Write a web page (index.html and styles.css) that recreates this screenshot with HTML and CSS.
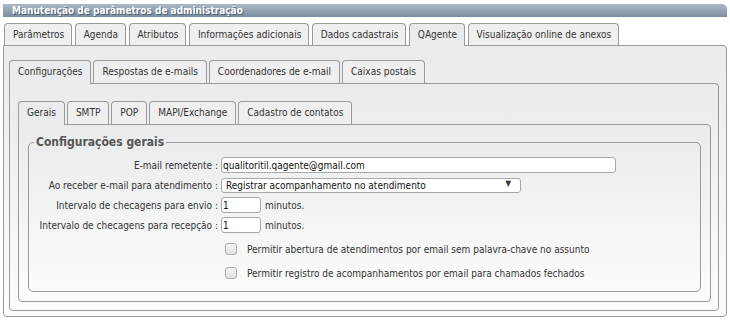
FILE: index.html
```html
<!DOCTYPE html>
<html lang="pt-br">
<head>
  <meta charset="UTF-8" />
  <title>Manutenção de parâmetros de administração</title>
  <link rel="stylesheet" href="styles.css">
</head>
<body>
  <div class="page">
    <div class="titlebar">Manutenção de parâmetros de administração</div>

    <div class="tabs tabs-main">
      <div class="tab">Parâmetros</div>
      <div class="tab">Agenda</div>
      <div class="tab">Atributos</div>
      <div class="tab">Informações adicionais</div>
      <div class="tab">Dados cadastrais</div>
      <div class="tab active">QAgente</div>
      <div class="tab">Visualização online de anexos</div>
    </div>
    <div class="panel panel-main">

      <div class="tabs tabs-sub">
        <div class="tab active">Configurações</div>
        <div class="tab">Respostas de e-mails</div>
        <div class="tab">Coordenadores de e-mail</div>
        <div class="tab">Caixas postais</div>
      </div>
      <div class="panel panel-sub">

        <div class="tabs tabs-sub">
          <div class="tab active">Gerais</div>
          <div class="tab">SMTP</div>
          <div class="tab">POP</div>
          <div class="tab">MAPI/Exchange</div>
          <div class="tab">Cadastro de contatos</div>
        </div>
        <div class="panel panel-inner">
          <fieldset class="config">
            <legend>Configurações gerais</legend>

            <div class="form-row">
              <label>E-mail remetente :</label>
              <input type="text" class="input-email" value="qualitoritil.qagente@gmail.com">
            </div>
            <div class="form-row">
              <label>Ao receber e-mail para atendimento :</label>
              <div class="select-wrap">
                <select>
                  <option>Registrar acompanhamento no atendimento</option>
                </select>
              </div>
            </div>
            <div class="form-row">
              <label>Intervalo de checagens para envio :</label>
              <div class="inline"><input type="text" class="input-small" value="1"> minutos.</div>
            </div>
            <div class="form-row">
              <label>Intervalo de checagens para recepção :</label>
              <div class="inline"><input type="text" class="input-small" value="1"> minutos.</div>
            </div>

            <div class="check-row check-first">
              <input type="checkbox">
              <span>Permitir abertura de atendimentos por email sem palavra-chave no assunto</span>
            </div>
            <div class="check-row">
              <input type="checkbox">
              <span>Permitir registro de acompanhamentos por email para chamados fechados</span>
            </div>
          </fieldset>
        </div>
      </div>
    </div>
  </div>
</body>
</html>
```

FILE: styles.css
```css
:root {
  --borda: #9a9a9a;
  --texto: #333333;
  --painel-topo: #e9ebec;
  --painel-base: #fcfcfc;
  --aba: #efefef;
}

* {
  box-sizing: border-box;
}

body {
  margin: 0;
  background: #ffffff;
  font-family: "DejaVu Sans Condensed", "DejaVu Sans", sans-serif;
  font-size: 10px;
  color: var(--texto);
}

.page {
  margin: 4px 3px 0 3px;
}

.titlebar {
  height: 13px;
  line-height: 13px;
  padding-left: 9px;
  background: linear-gradient(#a9b8c6, #7b8ea1);
  border-radius: 0 5px 0 0;
  color: #ffffff;
  font-weight: bold;
  text-shadow: 1px 1px 0 #4d5d6d;
}

/* abas */
.tabs {
  display: flex;
  align-items: flex-end;
  gap: 2px;
}

.tabs-main {
  margin-top: 6px;
  padding-left: 1px;
  gap: 2.5px;
}

.tab {
  height: 22px;
  line-height: 21px;
  padding: 0 7px 0 8px;
  border: 1px solid var(--borda);
  border-bottom: none;
  border-radius: 4px 4px 0 0;
  background: var(--aba);
  white-space: nowrap;
}

.tabs-sub .tab {
  height: 23px;
  line-height: 22px;
  padding: 0 8px;
}

.tab.active {
  position: relative;
  margin-bottom: -1px;
  height: 23px;
  background: var(--painel-topo);
}

.tabs-sub .tab.active {
  height: 24px;
}

/* paineis */
.panel {
  border: 1px solid var(--borda);
  border-radius: 0 4px 4px 4px;
  background: linear-gradient(var(--painel-topo), var(--painel-base));
}

.panel-main {
  padding: 14px 7px 5px 5px;
}

.panel-sub {
  padding: 17px 7px 8px 8px;
}

.panel-inner {
  padding: 10px 9px 9px 9px;
}

/* formulario */
.config {
  margin: 0;
  padding: 7px 8px 12px 8px;
  border: 1px solid var(--borda);
  border-radius: 5px;
}

.config legend {
  margin-left: -3px;
  padding: 0 2px;
  font-size: 12px;
  line-height: 15px;
  font-weight: bold;
  color: #555555;
}

.form-row {
  display: grid;
  grid-template-columns: 181px auto;
  column-gap: 3px;
  align-items: center;
  height: 16px;
  margin-bottom: 4px;
}

.form-row label {
  text-align: right;
  white-space: nowrap;
}

input[type="text"],
select {
  font-family: inherit;
  font-size: 10px;
  color: #111111;
  background: #ffffff;
  border: 1px solid #a8a8a8;
  border-radius: 3px;
}

.input-email {
  width: 395px;
  height: 16px;
  padding: 0 1px;
}

.input-small {
  width: 40px;
  height: 16px;
  padding: 0 1px;
}

.inline {
  display: flex;
  align-items: center;
  gap: 4px;
}

.select-wrap {
  position: relative;
  width: 300px;
}

.select-wrap select {
  appearance: none;
  width: 300px;
  height: 15px;
  padding: 0 4px;
}

.select-wrap::after {
  content: "▼";
  position: absolute;
  right: 10px;
  top: 1px;
  font-size: 8px;
  color: #333333;
}

.check-row {
  display: flex;
  align-items: center;
  gap: 10px;
  margin-left: 188px;
  height: 12px;
  margin-top: 12px;
}

.check-first {
  margin-top: 10px;
}

.check-row input {
  appearance: none;
  margin: 0;
  width: 12px;
  height: 12px;
  border: 1px solid #acacac;
  border-radius: 3px;
  background: linear-gradient(#f4f4f4, #e2e2e2);
}
```
